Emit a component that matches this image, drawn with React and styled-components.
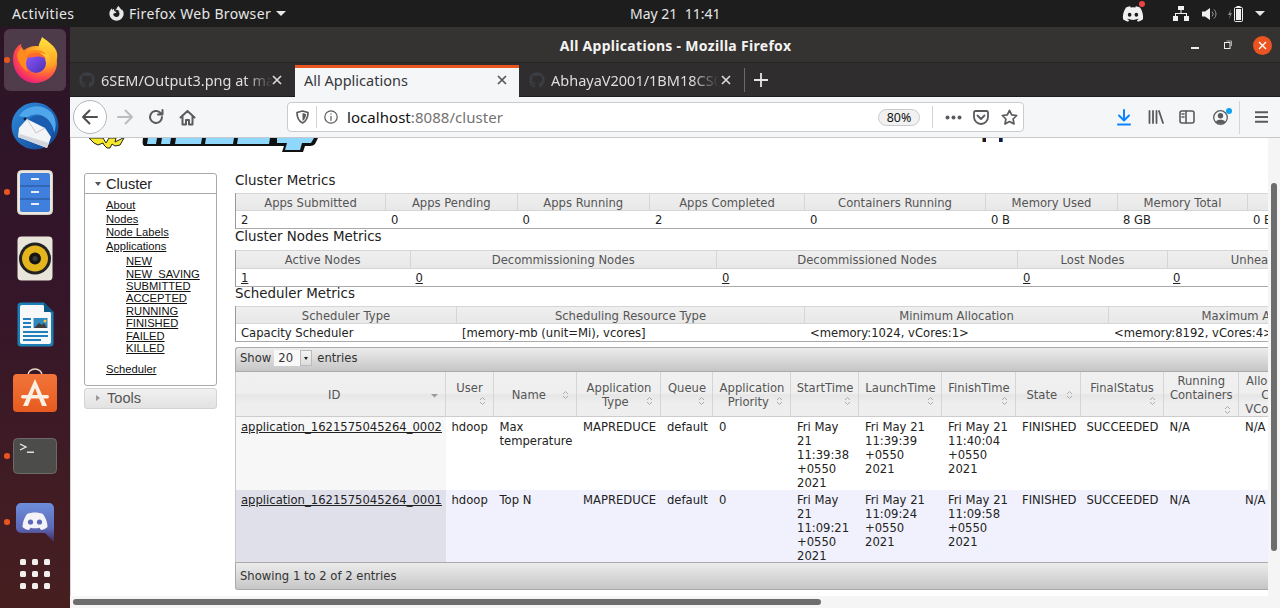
import React from "react";
import styled, { createGlobalStyle } from "styled-components";
import { FaDiscord, FaGithub, FaFirefoxBrowser } from "react-icons/fa";

const Global = createGlobalStyle`
  html, body { margin: 0; padding: 0; width: 1280px; height: 608px; overflow: hidden; background: #fff; }
  * { box-sizing: border-box; }
`;

const SHELL = `"Noto Sans", "Open Sans", sans-serif`;
const PAGE = `"DejaVu Sans", sans-serif`;
const NAVF = `"Liberation Sans", Arial, sans-serif`;

const Screen = styled.div`
  width: 1280px; height: 608px; display: flex; flex-direction: column; overflow: hidden;
  font-family: ${SHELL};
`;
const TopBar = styled.header`
  height: 27px; flex: none; background: #1d1d1d; color: #e6e6e6; font-size: 14px;
  display: grid; grid-template-columns: 630px auto 1fr; align-items: center;
`;
const TopLeft = styled.div`display: flex; align-items: center; padding-left: 12px;`;
const Activities = styled.span`width: 97px; letter-spacing: 0.4px;`;
const AppName = styled.span`margin-left: 5px; letter-spacing: 0.35px;`;
const Caret = styled.span`
  display: inline-block; width: 0; height: 0; margin-left: 5px;
  border-left: 5px solid transparent; border-right: 5px solid transparent; border-top: 5px solid #e6e6e6;
`;
const Clock = styled.div`white-space: pre; font-size: 14px;`;
const Tray = styled.div`display: flex; align-items: center; justify-content: flex-end; padding-right: 15px; height: 27px;`;
const TrayBadgeWrap = styled.span`position: relative; display: flex; margin-right: 29px;`;
const RedDot = styled.span`position: absolute; right: -1px; top: -2px; width: 6px; height: 6px; border-radius: 50%; background: #ed4245;`;
const TrayIcon = styled.svg`display: block; margin-right: ${p => p.$mr || 0}px; flex: none;`;

const Body = styled.div`flex: 1; display: flex; min-height: 0;`;
const Dock = styled.nav`
  width: 70px; flex: none; display: flex; flex-direction: column;
  background: linear-gradient(180deg, #2b1426 0%, #33152a 40%, #471f20 100%);
`;
const DockItem = styled.div`
  height: ${p => p.$h || 66}px; flex: none; position: relative; display: flex; align-items: center; justify-content: center;
`;
const DockActive = styled.div`
  position: absolute; left: 4px; top: 2px; width: 62px; height: 62px; border-radius: 6px; background: rgba(255,255,255,.17);
`;
const RunDot = styled.span`
  position: absolute; left: 4px; top: 50%; margin-top: -3px; width: 5.5px; height: 5.5px; border-radius: 50%; background: #e95420;
`;
const DockSvg = styled.svg`display: block; position: relative;`;
const AppGrid = styled.div`display: grid; grid-template-columns: repeat(3, 6px); gap: 6px;`;
const GridDot = styled.span`width: 6px; height: 6px; border-radius: 1.5px; background: #f2f0ec;`;

const Win = styled.div`flex: 1; min-width: 0; display: flex; flex-direction: column;`;
const TitleBar = styled.div`
  height: 36px; flex: none; background: #353331; color: #f4f3f1; font-weight: 700; font-size: 14px;
  display: flex; align-items: center; justify-content: center; position: relative; border-bottom: 1px solid #262524;
`;
const WinTitle = styled.span`margin-left: 1px; margin-top: 2px; letter-spacing: 0.3px;`;
const WinControls = styled.div`position: absolute; right: 8px; top: 0; height: 36px; display: flex; align-items: center;`;
const Minimize = styled.span`width: 8px; height: 2px; background: #eee; margin-top: 5px; margin-right: 25px;`;
const Maximize = styled.svg`display: block; margin-right: 21px; margin-top: -1px;`;
const CloseBtn = styled.span`
  width: 19px; height: 19px; border-radius: 50%; background: #e95420; display: flex; align-items: center; justify-content: center;
`;

const TabBar = styled.div`
  height: 34px; flex: none; background: #2f2d2e; display: flex; align-items: stretch; border-bottom: 1px solid #1e1d1d;
`;
const Tab = styled.div`
  width: ${p => p.$w}px; flex: none; display: flex; align-items: center; padding-left: ${p => p.$pl}px; position: relative;
  font-size: 14.5px; color: ${p => p.$active ? "#35373c" : "#dededf"};
  background: ${p => p.$active ? "#f5f6f7" : "transparent"};
  border-top: ${p => p.$active ? "3px solid #e95420" : "0"};
  margin-top: ${p => p.$active ? "2px" : "0"};
  margin-bottom: ${p => p.$active ? "-1px" : "0"};
  padding-bottom: ${p => p.$active ? "6px" : "0"};
`;
const TabLabel = styled.span`
  width: ${p => p.$w}px; white-space: nowrap; overflow: hidden; flex: none; margin-left: ${p => p.$ml || 0}px;
  ${p => p.$fade ? "mask-image: linear-gradient(to right, #000 84%, transparent 100%);" : ""}
`;
const TabClose = styled.svg`position: absolute; right: ${p => p.$r}px; top: 50%; margin-top: ${p => p.$mt || -6}px; display: block;`;
const TabSep = styled.span`width: 1px; height: 24px; background: #6b6a6a; align-self: center; flex: none;`;
const NewTab = styled.svg`display: block; align-self: center; margin-left: 9px;`;

const Toolbar = styled.div`
  height: 41px; flex: none; background: #f5f6f7; border-bottom: 1px solid #c6c8cb; display: flex; align-items: center; position: relative;
`;
const BackBtn = styled.span`
  width: 34px; height: 34px; border-radius: 50%; background: #fff; border: 1px solid #b4b6b8; margin-left: 3px;
  display: flex; align-items: center; justify-content: center; flex: none;
`;
const Glyph = styled.svg`
  display: block; flex: none; margin-left: ${p => p.$ml || 0}px;
  fill: none; stroke: ${p => p.$c || "#5b5b5f"}; stroke-width: ${p => p.$sw || 2}; stroke-linecap: round; stroke-linejoin: round;
`;
const UrlBar = styled.div`
  width: 737px; height: 30px; flex: none; margin-left: 91px; background: #fff; border: 1px solid #c9cbce; border-radius: 4px;
  display: flex; align-items: center;
`;
const UrlDivider = styled.span`width: 1px; height: 22px; background: #d3d4d6; flex: none; margin-left: ${p => p.$ml}px;`;
const Url = styled.span`margin-left: 9px; font-size: 15px; color: #111; letter-spacing: 0.05px; width: 531px; white-space: nowrap;`;
const UrlDim = styled.span`color: #737373;`;
const ZoomPill = styled.span`
  width: 42px; height: 17px; border: 1px solid #c8cacd; border-radius: 9px; background: #f1f1f2; font-size: 12.5px; color: #111;
  display: flex; align-items: center; justify-content: center;
`;
const ToolSep = styled.span`width: 1px; height: 33px; background: #d3d4d6; flex: none; margin-left: ${p => p.$ml}px;`;
const AccountWrap = styled.span`position: relative; display: block; margin-left: 18px;`;
const BlueDot = styled.span`position: absolute; right: -4px; top: -2px; width: 6px; height: 6px; border-radius: 50%; background: #0ca4f0;`;

const Viewport = styled.div`flex: 1; min-height: 0; display: flex; flex-direction: column; background: #f5f5f5;`;
const ViewMain = styled.div`flex: 1; min-height: 0; display: flex;`;
const Page = styled.main`
  flex: 1; min-width: 0; background: #fff; overflow: hidden; border-left: 1px solid #d6d6d6; display: flex; flex-direction: column;
  font-family: ${PAGE}; font-size: 11.6px; color: #222;
`;
const VTrack = styled.div`width: 12px; flex: none; padding: 45px 3px 0;`;
const VThumb = styled.div`width: 6px; height: 368px; border-radius: 3px; background: #6d6d6d;`;
const HTrack = styled.div`height: 12px; flex: none; padding: 3px 0 0 3px;`;
const HThumb = styled.div`width: 748px; height: 6px; border-radius: 3px; background: #6d6d6d;`;

const LogoRow = styled.div`height: 35px; flex: none; display: flex; align-items: flex-start;`;
const Logo = styled.svg`display: block; margin-left: 17px; flex: none;`;
const LogoStems = styled.svg`display: block; margin-left: 659px; flex: none;`;

const Columns = styled.div`flex: 1; display: flex; align-items: flex-start; padding-left: 13px; gap: 18px; min-height: 0;`;
const SideCol = styled.aside`width: 133px; flex: none; font-family: ${NAVF}; color: #111; display: flex; flex-direction: column; gap: 2px;`;
const SideBox = styled.section`border: 1px solid #aaa; border-radius: 3px; background: #fff; height: 213px;`;
const SideHead = styled.h3`
  margin: 0; height: 20px; border-bottom: 1px solid #aaa; display: flex; align-items: center; font-weight: 400; font-size: 14.6px; color: #222;
`;
const Tri = styled.span`
  width: 0; height: 0; flex: none;
  ${p => p.$open
    ? "margin: 0 5px 0 10px; border-left: 3.5px solid transparent; border-right: 3.5px solid transparent; border-top: 4px solid #555;"
    : "margin: 0 7px 0 11px; border-top: 3.5px solid transparent; border-bottom: 3.5px solid transparent; border-left: 4px solid #999;"}
`;
const SideLinks = styled.div`padding: 5px 0 0 21px; font-size: 11.2px; display: flex; flex-direction: column;`;
const SideLink = styled.a`color: #111; text-decoration: underline; line-height: 13.6px;`;
const SubLinks = styled.div`padding: 1.800px 0 0 20px; margin-bottom: 9px; display: flex; flex-direction: column; line-height: 12.4px;`;
const SubLink = styled.a`color: #111; text-decoration: underline; line-height: 12.4px; font-size: 11.2px;`;
const ToolsBox = styled.section`
  height: 21px; border: 1px solid #d3d3d3; border-radius: 3px; display: flex; align-items: center; padding-bottom: 1px;
  background: linear-gradient(180deg, #f1f1f1, #e2e2e2); font-size: 14.6px; color: #555;
`;

const MainCol = styled.div`width: 1110px; flex: none;`;
const SecTitle = styled.h3`
  margin: ${p => p.$mt || 0}px 0 0; height: ${p => p.$h}px; font-weight: 400; font-size: 13.4px; line-height: 15px; color: #222; white-space: nowrap;
`;
const MetricTable = styled.div`border-left: 1px solid #999; border-bottom: 1px solid #aaa;`;
const Row = styled.div`display: grid; grid-template-columns: ${p => p.$cols};`;
const DataRow = styled(Row)`border-left: 1px solid #c8c8c8;`;
const MetricHead = styled.div`
  height: ${p => p.$h || 18}px; display: flex; align-items: center; justify-content: center; white-space: nowrap; color: #555; padding-top: 1px;
  background: linear-gradient(180deg, #efefef, #e8e8e8); border-top: 1px solid #d5d5d5; border-bottom: 1px solid #d5d5d5; border-right: 1px solid #d5d5d5;
`;
const MetricCell = styled.div`height: 17px; display: flex; align-items: center; padding-left: 5px; white-space: nowrap; color: #222;`;
const Under = styled.a`color: #222; text-decoration: underline;`;

const DataWrap = styled.section`margin-top: 5px;`;
const Bar = styled.div`
  height: ${p => p.$h}px; display: flex; align-items: center; padding-left: 4px; color: #333; white-space: nowrap;
  padding-bottom: ${p => p.$bottom ? 0 : 3}px;
  border: 1px solid #aaa; border-right: 0;
  border-radius: ${p => p.$bottom ? "0 0 0 3px" : "3px 0 0 0"};
  background: linear-gradient(180deg, #ececec, #c6c6c6);
`;
const SelectBox = styled.span`
  width: 38px; height: 16px; margin: 0 5px 0 3px; display: flex; background: #f6f6f6;
`;
const SelectVal = styled.span`width: 26px; padding-left: 4px; background: #f8f8f8; line-height: 16px;`;
const SelectBtn = styled.span`
  width: 12px; background: linear-gradient(180deg, #f4f4f4, #dcdcdc); border: 1px solid #bbb; display: flex; align-items: center; justify-content: center;
`;
const SelectTri = styled.span`width: 0; height: 0; border-left: 2.5px solid transparent; border-right: 2.5px solid transparent; border-top: 3px solid #222;`;

const Head = styled.div`
  height: 45px; position: relative; display: flex; flex-direction: column; justify-content: center; text-align: center; color: #555; overflow: hidden;
  line-height: 14px; white-space: pre;
  padding: ${p => p.$side ? "2px 13px 0 1px" : p.$lift ? "2px 0 14px 1px" : "2px 0 0 1px"};
  background: linear-gradient(180deg, #f0f0f0 0%, #efefef 48%, #e6e6e6 52%, #eeeeee 70%, #efefef 100%);
  border-right: 1px solid #d5d5d5; border-bottom: 1px solid #ccc;
`;
const Sort = styled.svg`position: absolute; right: 7px; top: ${p => p.$top}px; display: block;`;
const DataCell = styled.div`
  padding: 3px 6px 0 ${p => p.$first ? 5 : 6}px; line-height: 14px; height: 72.5px; color: #222; overflow: hidden;
  background: ${p => p.$bg};
`;
const IdLink = styled.a`color: #222; text-decoration: underline; white-space: nowrap;`;

const COLS1 = "150px 131.5px 132.5px 155px 181px 132px 130px 160px";
const COLS2 = "174.5px 306.5px 301px 150px 226px";
const COLS3 = "221px 348px 304px 304px";
const DCOLS = "209.5px 48px 83.5px 84px 52px 78px 68px 83px 74px 64.5px 83px 75.5px 68px";

const FirefoxIcon = () => (
  <DockSvg width="48" height="48" viewBox="0 0 48 48">
    <defs>
      <radialGradient id="ffb" cx="70%" cy="25%" r="85%">
        <stop offset="0" stopColor="#ffd83a" /><stop offset=".4" stopColor="#ff9c26" />
        <stop offset=".72" stopColor="#ff4a4a" /><stop offset="1" stopColor="#e31587" />
      </radialGradient>
      <linearGradient id="ffp" x1="0" y1="0" x2="1" y2="1">
        <stop offset="0" stopColor="#9059ff" /><stop offset="1" stopColor="#4a2fb5" />
      </linearGradient>
      <linearGradient id="ffy" x1="0" y1="0" x2="0" y2="1">
        <stop offset="0" stopColor="#ffe53d" /><stop offset="1" stopColor="#ff9a1f" />
      </linearGradient>
    </defs>
    <path d="M2 23C2 13 8 9 10 8c0 3 1 5 3 6 3-2 7-4 12-4 9 0 21 6 21 17 0 11-10 20-22 20C12 47 2 37 2 23z" fill="url(#ffb)" />
    <path d="M31 1c-1 4-4 7-3 11 6 2 11 7 12 14 1 2 1 4 1 6 4-4 6-9 5-15C45 11 38 6 31 1z" fill="url(#ffy)" />
    <path d="M6 19c1-4 3-6 5-8 0 3 2 5 5 6 3-3 6-3 9-3 4 0 8 1 11 5-4-2-8-2-11-1-6 1-10 5-10 11 0 3 1 5 2 7-6-4-10-10-11-17z" fill="#ff8a1e" />
    <circle cx="25" cy="27" r="10" fill="url(#ffp)" />
    <path d="M15 21c4-4 9-5 13-4 3 1 6 3 7 6-3-2-7-3-11-2-3 0-6 1-9 0z" fill="#ff6a2a" />
  </DockSvg>
);
const ThunderbirdIcon = () => (
  <DockSvg width="48" height="48" viewBox="0 0 48 48">
    <defs>
      <linearGradient id="tb" x1="0" y1="0" x2="1" y2="1">
        <stop offset="0" stopColor="#2f8fe0" /><stop offset="1" stopColor="#11408f" />
      </linearGradient>
    </defs>
    <circle cx="24" cy="24" r="23.5" fill="url(#tb)" />
    <path d="M8 14C14 4 30 0 40 10c5 6 6 14 3 21-1-9-6-16-14-18-5-1-9 0-12 2-3 0-6 0-9-1z" fill="#4fa6ea" />
    <path d="M16 21c2-6 9-8 15-7 6 2 9 8 10 14 0 4-1 9-3 13-1-7-3-13-8-17-4-3-9-3-14-3z" fill="#1a5cb0" />
    <circle cx="14" cy="17" r="1.4" fill="#0d2036" />
    <path d="M8 26l8-9 18 9 6 9-4 11L7 35z" fill="#f3f4f6" />
    <path d="M16 17l9 14 9-5" fill="none" stroke="#c6c8cf" strokeWidth="1" />
    <path d="M36 46L7 35l2-3 29 9z" fill="#d3d5dc" />
  </DockSvg>
);
const FilesIcon = () => (
  <DockSvg width="36" height="45" viewBox="0 0 36 45">
    <rect x=".5" y=".5" width="35" height="44" rx="4" fill="#ece8dd" stroke="#d4cfc2" />
    <rect x="3" y="3" width="30" height="39" rx="2" fill="#3f80dd" />
    <rect x="3" y="15.5" width="30" height="1" fill="#264f91" /><rect x="3" y="28.5" width="30" height="1" fill="#264f91" />
    <rect x="14" y="8" width="8" height="2" fill="#e8edf4" /><rect x="14" y="21" width="8" height="2" fill="#e8edf4" /><rect x="14" y="33" width="8" height="2" fill="#e8edf4" />
  </DockSvg>
);
const RhythmIcon = () => (
  <DockSvg width="36" height="45" viewBox="0 0 36 45">
    <rect x=".5" y=".5" width="35" height="44" rx="4" fill="#e9e5da" />
    <circle cx="18" cy="22.5" r="16" fill="#222" />
    <circle cx="18" cy="22.5" r="13" fill="#e5b51d" />
    <circle cx="18" cy="22.5" r="6" fill="#161616" />
    <circle cx="18" cy="22.5" r="2.5" fill="#3c3c3c" />
  </DockSvg>
);
const WriterIcon = () => (
  <DockSvg width="37" height="45" viewBox="0 0 37 45">
    <path d="M4 .5h23L36.5 10v31a3.5 3.5 0 0 1-3.5 3.5H4A3.5 3.5 0 0 1 .5 41V4A3.5 3.5 0 0 1 4 .5z" fill="#1d7eb5" />
    <path d="M5 3h21l8 8v29a2 2 0 0 1-2 2H5a2 2 0 0 1-2-2V5a2 2 0 0 1 2-2z" fill="#f7f8f9" />
    <path d="M27 .5L36.5 10H27z" fill="#0e5a86" />
    <rect x="6" y="16" width="8" height="2" fill="#2180bb" /><rect x="6" y="20" width="8" height="2" fill="#2180bb" /><rect x="6" y="24" width="8" height="2" fill="#2180bb" />
    <rect x="6" y="29" width="25" height="2" fill="#2180bb" /><rect x="6" y="33" width="25" height="2" fill="#2180bb" /><rect x="6" y="37" width="18" height="2" fill="#2180bb" />
    <rect x="16.500" y="16" width="14" height="10" fill="#2f89bf" />
    <path d="M17 26l5-5 3 2 2-2 3 5z" fill="#3d3d3d" /><circle cx="28" cy="19" r="1.5" fill="#f4c93c" />
  </DockSvg>
);
const SoftwareIcon = () => (
  <DockSvg width="44" height="44" viewBox="0 0 44 44">
    <defs><linearGradient id="sw" x1="0" y1="0" x2="0" y2="1"><stop offset="0" stopColor="#f2743a" /><stop offset="1" stopColor="#e65b1f" /></linearGradient></defs>
    <path d="M15 8V7a7 6 0 0 1 14 0v1" fill="none" stroke="#e8d9c2" strokeWidth="1.6" />
    <rect y="6" width="44" height="38" rx="4" fill="url(#sw)" />
    <path d="M22 11L10 38h5l7-18 7 18h5z" fill="#fbeee3" />
    <rect x="8" y="27" width="28" height="3.4" rx="1.7" fill="#fbeee3" />
  </DockSvg>
);
const TerminalIcon = () => (
  <DockSvg width="44" height="36" viewBox="0 0 44 36">
    <rect x=".5" y=".5" width="43" height="35" rx="4" fill="#4c4c4a" stroke="#6b6b69" />
    <path d="M7 6l6 3-6 3" fill="none" stroke="#eee" strokeWidth="1.3" />
    <rect x="14" y="13.500" width="7" height="1.4" fill="#eee" />
  </DockSvg>
);
const DiscordDock = () => (
  <DockSvg width="38" height="39" viewBox="0 0 38 39">
    <defs><linearGradient id="dd" x1="0" y1="0" x2="0" y2="1"><stop offset="0" stopColor="#6d8fdc" /><stop offset=".65" stopColor="#5d68b8" /><stop offset="1" stopColor="#402a55" /></linearGradient></defs>
    <path d="M5 0h28a5 5 0 0 1 5 5v34l-9-9H5a5 5 0 0 1-5-5V5a5 5 0 0 1 5-5z" fill="url(#dd)" />
    <path d="M11 11c5-2 11-2 16 0 3 4 4.500 9 4.500 13-2 2-5 3-6.500 3l-1.500-2.300c-3 .8-6 .8-9 0L13 27c-2 0-4.500-1-6.500-3 0-4 1.500-9 4.500-13z" fill="#f4f4f8" />
    <circle cx="14.500" cy="19" r="2.600" fill="#5a6ab8" /><circle cx="23.500" cy="19" r="2.600" fill="#5a6ab8" />
  </DockSvg>
);
const XIcon = ({ r, c = "#d9d9d9", mt }) => (
  <TabClose $r={r} $mt={mt} width="12" height="12" viewBox="0 0 12 12"><path d="M2 2l8 8M10 2l-8 8" stroke={c} strokeWidth="1.700" /></TabClose>
);
const SortIcon = ({ top }) => (
  <Sort $top={top} width="7" height="10" viewBox="0 0 7 10"><path d="M1 4l2.500-2.500L6 4M1 6l2.500 2.500L6 6" fill="none" stroke="#aaa" strokeWidth="1" /></Sort>
);

const sideLinks = ["NEW", "NEW_SAVING", "SUBMITTED", "ACCEPTED", "RUNNING", "FINISHED", "FAILED", "KILLED"];
const m1 = [["Apps Submitted", "2"], ["Apps Pending", "0"], ["Apps Running", "0"], ["Apps Completed", "2"], ["Containers Running", "0"], ["Memory Used", "0 B"], ["Memory Total", "8 GB"], ["Memory Reserved", "0 B"]];
const m2 = [["Active Nodes", "1"], ["Decommissioning Nodes", "0"], ["Decommissioned Nodes", "0"], ["Lost Nodes", "0"], ["Unhealthy Nodes", "0"]];
const m3 = [["Scheduler Type", "Capacity Scheduler"], ["Scheduling Resource Type", "[memory-mb (unit=Mi), vcores]"], ["Minimum Allocation", "<memory:1024, vCores:1>"], ["Maximum Allocation", "<memory:8192, vCores:4>"]];

const heads = [
  { t: "ID", side: true, single: true },
  { t: "User", lift: true, top: 24 },
  { t: "Name", side: true },
  { t: "Application\nType\u00a0\u00a0", top: 24 },
  { t: "Queue", lift: true, top: 24 },
  { t: "Application\nPriority\u00a0\u00a0", top: 24 },
  { t: "StartTime", lift: true, top: 24 },
  { t: "LaunchTime", lift: true, top: 24 },
  { t: "FinishTime", lift: true, top: 24 },
  { t: "State", side: true },
  { t: "FinalStatus", lift: true, top: 24 },
  { t: "Running\nContainers", lift: true, top: 33 },
  { t: "Allocated\nCPU\nVCores\u00a0\u00a0\u00a0\u00a0", top: 33 },
];

const rows = [
  ["application_1621575045264_0002", "hdoop", "Max temperature", "MAPREDUCE", "default", "0", "Fri May 21 11:39:38 +0550 2021", "Fri May 21 11:39:39 +0550 2021", "Fri May 21 11:40:04 +0550 2021", "FINISHED", "SUCCEEDED", "N/A", "N/A"],
  ["application_1621575045264_0001", "hdoop", "Top N", "MAPREDUCE", "default", "0", "Fri May 21 11:09:21 +0550 2021", "Fri May 21 11:09:24 +0550 2021", "Fri May 21 11:09:58 +0550 2021", "FINISHED", "SUCCEEDED", "N/A", "N/A"],
];
const shade = [["#f7f7f7", "#ffffff"], ["#dfe0ea", "#f0f1fc"]];

function Metric({ cols, data, link, h }) {
  return (
    <MetricTable>
      <Row $cols={cols}>{data.map(d => <MetricHead key={d[0]} $h={h}>{d[0]}</MetricHead>)}</Row>
      <Row $cols={cols}>{data.map(d => <MetricCell key={d[0]}>{link ? <Under>{d[1]}</Under> : d[1]}</MetricCell>)}</Row>
    </MetricTable>
  );
}

export default function App() {
  return (
    <Screen>
      <Global />
      <TopBar>
        <TopLeft>
          <Activities>Activities</Activities>
          <FaFirefoxBrowser size={15} color="#e8e8e8" />
          <AppName>Firefox Web Browser</AppName>
          <Caret />
        </TopLeft>
        <Clock>May 21  11:41</Clock>
        <Tray>
          <TrayBadgeWrap><FaDiscord size={22} color="#f0f0f0" /><RedDot /></TrayBadgeWrap>
          <TrayIcon $mr={13} width="16" height="15" viewBox="0 0 16 15" fill="#f0f0f0">
            <rect x="5" y="0" width="6" height="4" /><rect x="0" y="10" width="5" height="5" /><rect x="11" y="10" width="5" height="5" />
            <path d="M7.500 4h1v3H14v3h-1V8H3v2H2V7h5.500z" />
          </TrayIcon>
          <TrayIcon $mr={11} width="15" height="14" viewBox="0 0 15 14" fill="#f0f0f0">
            <path d="M0 4.500h3L8 1v12L3 9.500H0z" />
            <path d="M10 4.500a3.500 3.500 0 0 1 0 5M12 2.500a6 6 0 0 1 0 9" fill="none" stroke="#999" strokeWidth="1" />
          </TrayIcon>
          <TrayIcon $mr={7} width="15" height="16" viewBox="0 0 15 16">
            <path d="M3 3L0 9h2l-1 4 3-6H2z" fill="#888" />
            <rect x="6.500" y="1.500" width="8" height="14" rx="1" fill="none" stroke="#f0f0f0" /><rect x="8.500" y="0" width="4" height="1.500" fill="#f0f0f0" />
            <rect x="8" y="3" width="5" height="11" fill="#f0f0f0" />
          </TrayIcon>
          <Caret />
        </Tray>
      </TopBar>
      <Body>
        <Dock>
          <DockItem><DockActive /><RunDot /><FirefoxIcon /></DockItem>
          <DockItem><ThunderbirdIcon /></DockItem>
          <DockItem><RunDot /><FilesIcon /></DockItem>
          <DockItem><RhythmIcon /></DockItem>
          <DockItem><WriterIcon /></DockItem>
          <DockItem><SoftwareIcon /></DockItem>
          <DockItem><RunDot /><TerminalIcon /></DockItem>
          <DockItem><RunDot /><DiscordDock /></DockItem>
          <DockItem $h={38}>
            <AppGrid>{Array.from({ length: 9 }, (_, i) => <GridDot key={i} />)}</AppGrid>
          </DockItem>
        </Dock>
        <Win>
          <TitleBar>
            <WinTitle>All Applications - Mozilla Firefox</WinTitle>
            <WinControls>
              <Minimize />
              <Maximize width="8" height="9" viewBox="0 0 8 9"><rect x=".5" y="2.500" width="5.500" height="6" fill="none" stroke="#eee" /><path d="M2.500 1H7.500V6" fill="none" stroke="#aaa" /></Maximize>
              <CloseBtn>
                <svg width="9" height="9" viewBox="0 0 9 9"><path d="M1 1l7 7M8 1L1 8" stroke="#fff" strokeWidth="1.300" /></svg>
              </CloseBtn>
            </WinControls>
          </TitleBar>
          <TabBar>
            <Tab $w={225} $pl={9}>
              <FaGithub size={16} color="#3a3d42" />
              <TabLabel $w={172} $ml={6} $fade>6SEM/Output3.png at master · AbhayaV2001</TabLabel>
              <XIcon r={12} />
            </Tab>
            <Tab $w={224} $pl={9} $active>
              <TabLabel $w={170}>All Applications</TabLabel>
              <XIcon r={11} mt={-9} c="#55575c" />
            </Tab>
            <Tab $w={225} $pl={10}>
              <FaGithub size={16} color="#3a3d42" />
              <TabLabel $w={168} $ml={6} $fade>AbhayaV2001/1BM18CS038-Hadoop</TabLabel>
              <XIcon r={12} />
            </Tab>
            <TabSep />
            <NewTab width="14" height="14" viewBox="0 0 14 14"><path d="M7 0v14M0 7h14" stroke="#e6e6e6" strokeWidth="1.800" /></NewTab>
          </TabBar>
          <Toolbar>
            <BackBtn>
              <Glyph width="18" height="18" viewBox="0 0 18 18" $c="#4f4f52"><path d="M2 9h14M8.500 2.500L2 9l6.500 6.500" /></Glyph>
            </BackBtn>
            <Glyph $ml={9} width="18" height="18" viewBox="0 0 18 18" $c="#bcbdbf"><path d="M2 9h14M9.500 2.500L16 9l-6.500 6.500" /></Glyph>
            <Glyph $ml={14} width="16" height="16" viewBox="0 0 16 16" $c="#5b5b5f"><path d="M14 8a6 6 0 1 1-2-4.500L14 5.500M14.500 1v4.500H10" /></Glyph>
            <Glyph $ml={15} width="17" height="17" viewBox="0 0 17 17" $c="#5b5b5f"><path d="M1.500 8.500L8.500 2l7 6.500M3.500 7v8.500h3.500V11h3v4.500h3.500V7" /></Glyph>
            <UrlBar>
              <Glyph $ml={8} width="13" height="14" viewBox="0 0 13 14" $c="#5b5b5f" $sw={1.7}>
                <path d="M1 2.500L6.500 1 12 2.500c0 5-1.500 8.500-5.500 10.500C2.500 11 1 7.500 1 2.500z" />
                <path d="M6.500 3L10 4c0 3-1 5.500-3.500 7z" fill="#5b5b5f" stroke="none" />
              </Glyph>
              <UrlDivider $ml={7} />
              <Glyph $ml={7} width="14" height="14" viewBox="0 0 14 14" $c="#5b5b5f" $sw={1.2}>
                <circle cx="7" cy="7" r="6.200" /><path d="M7 6.300v4M7 3.800v.3" />
              </Glyph>
              <Url>localhost<UrlDim>:8088/cluster</UrlDim></Url>
              <ZoomPill>80%</ZoomPill>
              <UrlDivider $ml={12} />
              <Glyph $ml={12} width="17" height="5" viewBox="0 0 17 5" $c="#5b5b5f" $sw={0.01}>
                <circle cx="2.500" cy="2.500" r="2" fill="#5b5b5f" /><circle cx="8.500" cy="2.500" r="2" fill="#5b5b5f" /><circle cx="14.500" cy="2.500" r="2" fill="#5b5b5f" />
              </Glyph>
              <Glyph $ml={11} width="16" height="15" viewBox="0 0 16 15" $c="#5b5b5f" $sw={1.8}>
                <path d="M1 2.500A1.500 1.500 0 0 1 2.500 1h11A1.500 1.500 0 0 1 15 2.500V7a7 7 0 0 1-14 0z" /><path d="M4.500 5.500L8 9l3.500-3.500" />
              </Glyph>
              <Glyph $ml={12} width="17" height="16" viewBox="0 0 17 16" $c="#5b5b5f" $sw={1.7}>
                <path d="M8.500 1.300l2.200 4.500 5 .7-3.600 3.500.9 5-4.500-2.400L4 15l.9-5L1.300 6.500l5-.7z" />
              </Glyph>
            </UrlBar>
            <Glyph $ml={93} width="14" height="17" viewBox="0 0 14 17" $c="#0a84ff" $sw={2}>
              <path d="M7 1v10M2 6.500L7 11.500 12 6.500M1 15.500h12" />
            </Glyph>
            <Glyph $ml={17} width="16" height="14" viewBox="0 0 16 14" $c="#5b5b5f" $sw={1.8}>
              <path d="M1.500 1v12M5 1v12M8.500 1v12M11 1l4 12" />
            </Glyph>
            <Glyph $ml={15} width="16" height="14" viewBox="0 0 16 14" $c="#5b5b5f" $sw={1.600}>
              <rect x="1" y="1" width="14" height="12" rx="2" /><path d="M7 1v12M3 4h2M3 7h2" />
            </Glyph>
            <AccountWrap>
              <Glyph width="15" height="15" viewBox="0 0 15 15" $c="#5b5b5f" $sw={1.300}>
                <circle cx="7.500" cy="7.500" r="6.800" /><circle cx="7.500" cy="5.800" r="2.700" fill="#5b5b5f" stroke="none" />
                <path d="M3 11.500c1-2.500 8-2.500 9 0v1l-4.500 1.500L3 12.500z" fill="#5b5b5f" stroke="none" />
              </Glyph>
              <BlueDot />
            </AccountWrap>
            <ToolSep $ml={11} />
            <Glyph $ml={15} width="13" height="12" viewBox="0 0 13 12" $c="#5b5b5f" $sw={2}>
              <path d="M.5 1.200h12M.5 6h12M.5 10.800h12" />
            </Glyph>
          </Toolbar>
          <Viewport>
            <ViewMain>
              <Page>
                <LogoRow>
                  <Logo width="235" height="15" viewBox="0 0 235 15">
                    <path d="M1 0h14l3 5 3-5h7l-1 4 8-4 1 0-4 7-5 1-3-2-2 4-3 0-3-3-1-2-5 2-4-2-3-3z" fill="#f6ea2a" stroke="#222" strokeWidth="1" />
                    <path d="M55 0H230l-3 6c-1 1-3 2-5 2H217l-2 6h-21l2-6H58c-3 0-4-1-3-8z" fill="#111" />
                    <path d="M60 0h9l-1 6h-9zM74 0h9l-1 6h-9zM88 0h26l-1 6H87zM118 0h28l-1 6h-28zM150 0h32l-1 6h-32zM189 0h37l-3 5h-9l-2 7h-15l2-7h-10z" fill="#8fd8fb" />
                  </Logo>
                  <LogoStems width="21" height="5" viewBox="0 0 21 5">
                    <rect x="0" y="0" width="1" height="4" fill="#c9852d" /><rect x="1" y="0" width="3" height="4" fill="#101a30" />
                    <rect x="17" y="0" width="3" height="4" fill="#101a30" /><rect x="20" y="0" width="1" height="4" fill="#2a6fc0" />
                  </LogoStems>
                </LogoRow>
                <Columns>
                  <SideCol>
                    <SideBox>
                      <SideHead><Tri $open />Cluster</SideHead>
                      <SideLinks>
                        <SideLink>About</SideLink>
                        <SideLink>Nodes</SideLink>
                        <SideLink>Node Labels</SideLink>
                        <SideLink>Applications</SideLink>
                        <SubLinks>{sideLinks.map(s => <SubLink key={s}>{s}</SubLink>)}</SubLinks>
                        <SideLink>Scheduler</SideLink>
                      </SideLinks>
                    </SideBox>
                    <ToolsBox><Tri />Tools</ToolsBox>
                  </SideCol>
                  <MainCol>
                    <SecTitle $h={20}>Cluster Metrics</SecTitle>
                    <Metric cols={COLS1} data={m1} />
                    <SecTitle $h={21}>Cluster Nodes Metrics</SecTitle>
                    <Metric cols={COLS2} data={m2} link h={19} />
                    <SecTitle $h={20} $mt={-1}>Scheduler Metrics</SecTitle>
                    <Metric cols={COLS3} data={m3} />
                    <DataWrap>
                      <Bar $h={25}>Show
                        <SelectBox><SelectVal>20</SelectVal><SelectBtn><SelectTri /></SelectBtn></SelectBox>
                        entries
                      </Bar>
                      <DataRow $cols={DCOLS}>
                        {heads.map(h => (
                          <Head key={h.t} $side={h.side} $lift={h.lift}>
                            {h.t}
                            {h.single
                              ? <Sort $top={21} width="7" height="5" viewBox="0 0 7 5"><path d="M0 1h7L3.500 4.500z" fill="#999" /></Sort>
                              : <SortIcon top={h.side ? 18 : h.top} />}
                          </Head>
                        ))}
                      </DataRow>
                      {rows.map((r, i) => (
                        <DataRow key={r[0]} $cols={DCOLS}>
                          {r.map((c, j) => (
                            <DataCell key={j} $first={j === 0} $bg={shade[i][j === 0 ? 0 : 1]}>
                              {j === 0 ? <IdLink>{c}</IdLink> : c}
                            </DataCell>
                          ))}
                        </DataRow>
                      ))}
                      <Bar $h={28} $bottom>Showing 1 to 2 of 2 entries</Bar>
                    </DataWrap>
                  </MainCol>
                </Columns>
              </Page>
              <VTrack><VThumb /></VTrack>
            </ViewMain>
            <HTrack><HThumb /></HTrack>
          </Viewport>
        </Win>
      </Body>
    </Screen>
  );
}
